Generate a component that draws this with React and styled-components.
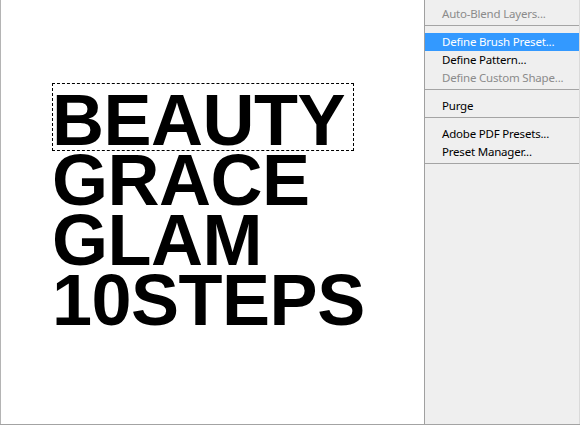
import styled, { createGlobalStyle } from 'styled-components';

const Global = createGlobalStyle`
  html, body {
    margin: 0;
    padding: 0;
    background: #fff;
  }
`;

const Screen = styled.div`
  width: 580px;
  height: 424px;
  display: flex;
  border-bottom: 1px solid #a3a3a3;
`;

const Canvas = styled.div`
  position: relative;
  flex: 1;
  background: #fff;
  border-left: 1px solid #b4b4b4;
  padding: 90px 0 0 51px;
`;

const Words = styled.div`
  font-family: 'Liberation Sans', Arial, sans-serif;
  font-weight: 700;
  font-size: 72px;
  line-height: 60px;
  letter-spacing: -0.5px;
  color: #000;
`;

// selection marquee drawn over the first word
const Marquee = styled.div`
  position: absolute;
  left: 51px;
  top: 83px;
  width: 300px;
  height: 66px;
  border: 1px dashed #000;
`;

const Menu = styled.div`
  width: 154px;
  background: #efefef;
  border-left: 1px solid #a0a0a0;
  border-right: 1px solid #dadada;
  padding-top: 5px;
  font-family: 'Noto Sans', 'Open Sans', sans-serif;
  font-size: 11.5px;
  letter-spacing: -0.2px;
`;

const Item = styled.div`
  height: 18px;
  line-height: 18px;
  padding-left: 17px;
  white-space: nowrap;
  background: ${(p) => (p.active ? '#3399ff' : 'transparent')};
  color: ${(p) => (p.active ? '#fff' : p.disabled ? '#8b8b8b' : '#000')};
`;

const Sep = styled.div`
  height: 1px;
  background: #a4a4a4;
  margin: 2px 0 7px;
`;

const menu = [
  { label: 'Auto-Blend Layers...', disabled: true },
  'sep',
  { label: 'Define Brush Preset...', active: true },
  { label: 'Define Pattern...' },
  { label: 'Define Custom Shape...', disabled: true },
  'sep',
  { label: 'Purge' },
  'sep',
  { label: 'Adobe PDF Presets...' },
  { label: 'Preset Manager...' },
  'sep',
];

export default function App() {
  return (
    <>
      <Global />
      <Screen>
        <Canvas>
          <Words>
            <div>BEAUTY</div>
            <div>GRACE</div>
            <div>GLAM</div>
            <div>10STEPS</div>
          </Words>
          <Marquee />
        </Canvas>
        <Menu>
          {menu.map((m, i) =>
            m === 'sep' ? (
              <Sep key={i} />
            ) : (
              <Item key={i} active={m.active} disabled={m.disabled}>
                {m.label}
              </Item>
            )
          )}
        </Menu>
      </Screen>
    </>
  );
}
